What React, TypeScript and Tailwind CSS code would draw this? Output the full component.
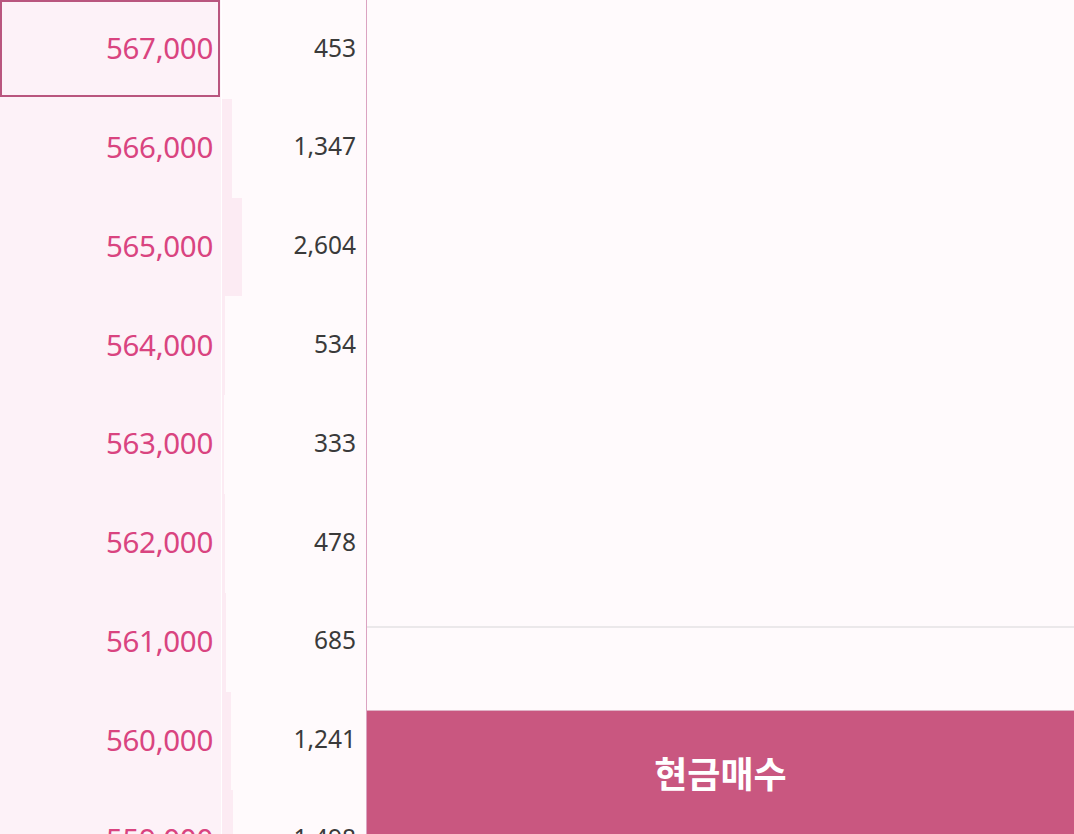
import React from "react";

const rows = [
  { price: "567,000", qty: "453", bar: 0, selected: true },
  { price: "566,000", qty: "1,347", bar: 10 },
  { price: "565,000", qty: "2,604", bar: 20 },
  { price: "564,000", qty: "534", bar: 3 },
  { price: "563,000", qty: "333", bar: 2 },
  { price: "562,000", qty: "478", bar: 3 },
  { price: "561,000", qty: "685", bar: 4 },
  { price: "560,000", qty: "1,241", bar: 9 },
  { price: "559,000", qty: "1,498", bar: 11 },
];

export default function App() {
  return (
    <div
      className="flex h-[834px] w-[1074px] overflow-hidden bg-[#fffafc]"
      style={{ fontFamily: '"Noto Sans", "Noto Sans CJK KR", sans-serif' }}
    >
      <div className="flex w-[366px] shrink-0 flex-col">
        {rows.map((r, i) => (
          <div key={i} className="flex h-[98.8px] shrink-0">
            <div className="relative flex w-[221px] shrink-0 items-center justify-end bg-[#fdf2f8] pb-[3px] pr-[8px]">
              {r.selected && (
                <div className="absolute left-0 top-0 h-[97px] w-[220px] border-2 border-[#b9567f]" />
              )}
              <span className="text-[29.5px] font-normal leading-none tracking-[-0.3px] text-[#d94480]">{r.price}</span>
            </div>
            <div className="w-px shrink-0 bg-white" />
            <div className="relative flex flex-1 items-center justify-end bg-[#fffafc] pb-[3px] pr-[10px]">
              {r.bar > 0 && (
                <div
                  className="absolute left-0 top-0 h-full bg-[#fcebf3]"
                  style={{ width: r.bar }}
                />
              )}
              <span className="relative text-[24.5px] font-normal leading-none text-[#3a3a3a]">{r.qty}</span>
            </div>
          </div>
        ))}
      </div>
      <div className="w-px shrink-0 bg-[#dba3c1]" />
      <div className="flex flex-1 flex-col">
        <div className="h-[626px] shrink-0" />
        <div className="h-[2px] shrink-0 bg-[#ebe8ea]" />
        <div className="h-[82px] shrink-0" />
        <div className="flex flex-1 items-center justify-center border-t border-[#dfb3c7] bg-[#c95780] pt-[4px]">
          <span className="text-[36px] font-semibold text-white">현금매수</span>
        </div>
      </div>
    </div>
  );
}
